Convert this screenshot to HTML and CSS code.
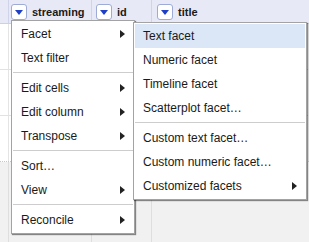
FILE: index.html
```html
<!DOCTYPE html>
<html lang="en">
<head>
    <meta charset="UTF-8">
    <meta name="viewport" content="width=device-width, initial-scale=1.0">
    <title>Column menu</title>
    <link rel="stylesheet" href="styles.css">
</head>
<body>

    <div class="grid">
        <div class="header">
            <div class="hcell hcell-first"></div>
            <div class="hcell hcell-streaming"><span class="drop-btn"></span><span class="hname">streaming</span></div>
            <div class="hcell hcell-id"><span class="drop-btn"></span><span class="hname">id</span></div>
            <div class="hcell hcell-title"><span class="drop-btn"></span><span class="hname">title</span></div>
        </div>
        <div class="rows">
            <div class="row"><div class="cell cell-first"></div><div class="cell cell-streaming"></div><div class="cell cell-id"></div><div class="cell cell-title"></div></div>
            <div class="row"><div class="cell cell-first"></div><div class="cell cell-streaming"></div><div class="cell cell-id"></div><div class="cell cell-title"></div></div>
            <div class="row row-last"><div class="cell cell-first"></div><div class="cell cell-streaming"></div><div class="cell cell-id"></div><div class="cell cell-title"></div></div>
        </div>
        <div class="empty">
            <div class="cell cell-first"></div><div class="cell cell-streaming"></div><div class="cell cell-id"></div><div class="cell cell-title"></div>
        </div>
    </div>

    <!-- column dropdown -->
    <div class="menu menu-main">
        <div class="menu-item">Facet<span class="arrow"></span></div>
        <div class="menu-item">Text filter</div>
        <div class="menu-sep"></div>
        <div class="menu-item">Edit cells<span class="arrow"></span></div>
        <div class="menu-item">Edit column<span class="arrow"></span></div>
        <div class="menu-item">Transpose<span class="arrow"></span></div>
        <div class="menu-sep"></div>
        <div class="menu-item">Sort…</div>
        <div class="menu-item">View<span class="arrow"></span></div>
        <div class="menu-sep"></div>
        <div class="menu-item">Reconcile<span class="arrow"></span></div>
    </div>

    <!-- facet submenu -->
    <div class="menu menu-sub">
        <div class="menu-item active">Text facet</div>
        <div class="menu-item">Numeric facet</div>
        <div class="menu-item">Timeline facet</div>
        <div class="menu-item">Scatterplot facet…</div>
        <div class="menu-sep"></div>
        <div class="menu-item">Custom text facet…</div>
        <div class="menu-item">Custom numeric facet…</div>
        <div class="menu-item">Customized facets<span class="arrow"></span></div>
    </div>

</body>
</html>
```

FILE: styles.css
```css
body {
    font-family: "Liberation Sans", Arial, sans-serif;
    margin: 0;
    padding: 0;
    width: 309px;
    height: 242px;
    overflow: hidden;
    background-color: #f1f1f1;
    color: #1a1a1a;
}
.grid {
    display: flex;
    flex-direction: column;
    height: 100%;
}
.header {
    display: flex;
    height: 23px;
    background-color: #e8e9f6;
    border-bottom: 1px solid #c9d0ea;
}
.hcell {
    display: flex;
    align-items: center;
    gap: 5px;
    box-sizing: border-box;
    border-right: 1px solid #cfd4ea;
    font-size: 11px;
    font-weight: bold;
}
.hcell-first, .cell-first {
    width: 9px;
    flex: none;
}
.hcell-streaming, .cell-streaming {
    width: 83px;
    flex: none;
    padding-left: 2px;
}
.hcell-id, .cell-id {
    width: 60px;
    flex: none;
    padding-left: 4px;
}
.hcell-title, .cell-title {
    flex: 1;
    padding-left: 5px;
    border-right: none;
}
.drop-btn {
    width: 16px;
    height: 16px;
    box-sizing: border-box;
    border: 1px solid #9eabd6;
    border-radius: 3px;
    background-color: #fff;
    display: flex;
    align-items: center;
    justify-content: center;
    flex: none;
}
.drop-btn::after {
    content: "";
    border-left: 4px solid transparent;
    border-right: 4px solid transparent;
    border-top: 5px solid #1f3fc8;
    margin-top: 1px;
}
.rows {
    background-color: #fff;
}
.row {
    display: flex;
    height: 45px;
    border-bottom: 1px solid #e2e2e2;
}
.row-last {
    border-bottom: 1px dotted #c8c8c8;
}
.cell {
    box-sizing: border-box;
    border-right: 1px solid #e4e4e4;
}
.empty {
    display: flex;
    flex: 1;
}
.empty .cell {
    border-right-color: #dedede;
}
.empty .cell-title {
    border-right: none;
}

.menu {
    position: absolute;
    box-sizing: border-box;
    background-color: #fff;
    border: 1px solid #a3a3a3;
    box-shadow: 1px 1px 1px rgba(0,0,0,0.45);
    padding: 1px;
    font-size: 12px;
}
.menu-main {
    left: 11px;
    top: 20px;
    width: 124px;
}
.menu-sub {
    left: 133px;
    top: 22px;
    width: 174px;
}
.menu-item {
    display: flex;
    align-items: center;
    justify-content: space-between;
    padding: 4px 8px;
    line-height: 16px;
    white-space: nowrap;
}
.menu-item.active {
    background-color: #dbe6f6;
}
.arrow {
    width: 0;
    height: 0;
    border-top: 4.5px solid transparent;
    border-bottom: 4.5px solid transparent;
    border-left: 5px solid #222;
}
.menu-sep {
    border-top: 1px solid #cdcdcd;
    margin: 2px 0 3px;
}
```
